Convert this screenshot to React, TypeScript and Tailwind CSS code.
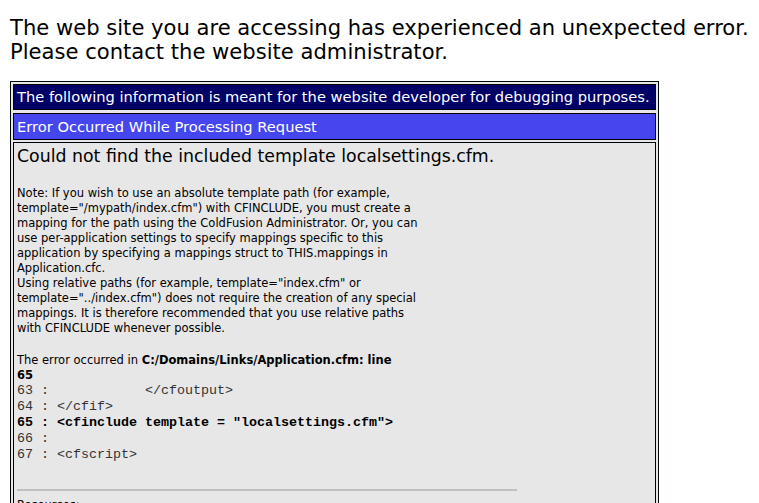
import React from "react";

const noteLines = [
  "Note: If you wish to use an absolute template path (for example,",
  'template="/mypath/index.cfm") with CFINCLUDE, you must create a',
  "mapping for the path using the ColdFusion Administrator. Or, you can",
  "use per-application settings to specify mappings specific to this",
  "application by specifying a mappings struct to THIS.mappings in",
  "Application.cfc.",
  'Using relative paths (for example, template="index.cfm" or',
  'template="../index.cfm") does not require the creation of any special',
  "mappings. It is therefore recommended that you use relative paths",
  "with CFINCLUDE whenever possible.",
];

const codeLines = [
  { text: "63 :            </cfoutput>", bold: false },
  { text: "64 : </cfif>", bold: false },
  { text: '65 : <cfinclude template = "localsettings.cfm">', bold: true },
  { text: "66 : ", bold: false },
  { text: "67 : <cfscript>", bold: false },
];

export default function App() {
  return (
    <div className="min-h-screen bg-white pl-[10px] pt-[16px] text-black font-['Verdana','DejaVu_Sans',sans-serif]">
      {/* Top message */}
      <div className="whitespace-nowrap text-[21.1px] leading-[24px]">
        The web site you are accessing has experienced an unexpected error.
        <br />
        Please contact the website administrator.
      </div>

      {/* Error table */}
      <div className="mt-[17px] flex w-[649px] flex-col gap-[2px] border border-[#000808] bg-[#e7e7e7] p-[2px]">
        <div className="flex h-[26px] items-center whitespace-nowrap border border-black bg-[#000066] px-[3px] text-[11pt] leading-[13pt] text-white">
          The following information is meant for the website developer for debugging purposes.
        </div>
        <div className="mt-px flex h-[27px] items-center whitespace-nowrap border border-black bg-[#4646ee] px-[3px] text-[11pt] leading-[13pt] text-white">
          Error Occurred While Processing Request
        </div>
        <div className="h-[400px] border border-black p-[3px]">
          <h1 className="text-[13pt] leading-[15pt]">
            Could not find the included template localsettings.cfm.
          </h1>

          <p className="mt-[20px] whitespace-nowrap text-[11.5px] leading-[15px]">
            {noteLines.map((line) => (
              <span key={line} className="block">
                {line}
              </span>
            ))}
          </p>

          <div className="mt-[17px] whitespace-nowrap text-[11.5px] leading-[15px]">
            The error occurred in <b>C:/Domains/Links/Application.cfm: line</b>
            <br />
            <b>65</b>
          </div>

          <pre className="font-['Liberation_Mono',monospace] text-[10pt] leading-[16px] text-[#333]">
            {codeLines.map((line) => (
              <div key={line.text} className={line.bold ? "font-bold text-black" : ""}>
                {line.text}
              </div>
            ))}
          </pre>

          <div className="mt-[26px] h-[2px] w-[500px] bg-[#c0c0c0]" />

          <div className="mt-[7px] text-[11.5px] leading-[15px]">Resources:</div>
        </div>
      </div>
    </div>
  );
}
